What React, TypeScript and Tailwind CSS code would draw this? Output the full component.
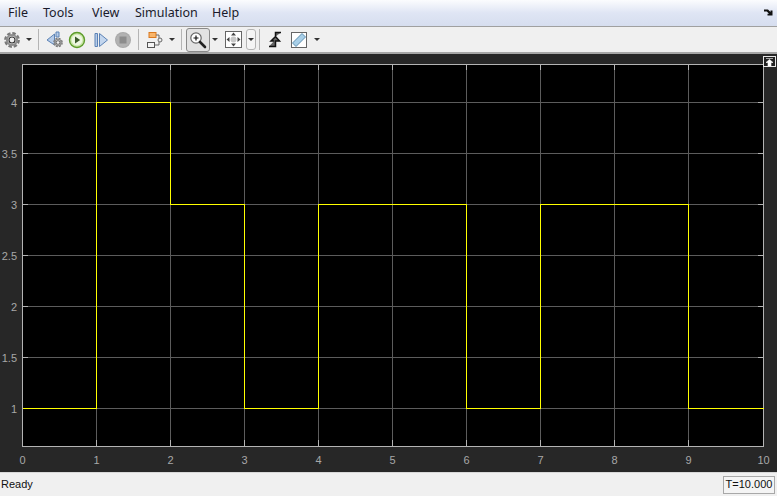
import React from "react";

const xs = Array.from({ length: 11 }, (_, i) => Math.floor(22 + i * 74.1) + 0.5);
const yTicks = [
  { l: "4", y: 102.5 },
  { l: "3.5", y: 153.5 },
  { l: "3", y: 204.5 },
  { l: "2.5", y: 255.5 },
  { l: "2", y: 306.5 },
  { l: "1.5", y: 357.5 },
  { l: "1", y: 408.5 },
];
const levels = [1, 4, 3, 1, 3, 3, 1, 3, 3, 1];
const yOf = (v: number) => 408.5 - (v - 1) * 102;

function signalPath() {
  let d = `M${xs[0]} ${yOf(levels[0])}`;
  levels.forEach((v, i) => {
    d += ` L${xs[i]} ${yOf(v)} L${xs[i + 1]} ${yOf(v)}`;
  });
  return d;
}

function Caret({ className = "" }: { className?: string }) {
  return <span className={`w-0 h-0 border-l-[3px] border-r-[3px] border-t-[3px] border-l-transparent border-r-transparent border-t-[#333] ${className}`} />;
}

function Sep({ className = "" }: { className?: string }) {
  return <span className={`w-px h-[21px] bg-[#b4b4b4] ${className}`} />;
}

function Gear({ size = 18, cx = 9, cy = 9 }: { size?: number; cx?: number; cy?: number }) {
  const s = size / 18;
  return (
    <g transform={`translate(${cx - 9 * s} ${cy - 9 * s}) scale(${s})`}>
      <circle cx="9" cy="9" r="6.6" fill="none" stroke="#7a7a7a" strokeWidth="2.6" strokeDasharray="3.4 1.8" />
      <circle cx="9" cy="9" r="5" fill="none" stroke="#8e8e8e" strokeWidth="2.2" />
      <circle cx="9" cy="9" r="3" fill="#f0f0f0" stroke="#333" strokeWidth="1.1" />
    </g>
  );
}

export default function App() {
  return (
    <div className="w-[777px] h-[496px] flex flex-col overflow-hidden bg-[#f0f0f0] font-['Noto_Sans',sans-serif]">
      <div className="h-[27px] shrink-0 flex items-center pl-2 text-[12.5px] text-[#1a1a2a] bg-gradient-to-b from-[#fbfcfe] via-[#dfe5f4] to-[#d6deef] border-b border-[#a0a0a0] relative">
        <span className="w-[35px]">File</span>
        <span className="w-[49px]">Tools</span>
        <span className="w-[43px]">View</span>
        <span className="w-[77px]">Simulation</span>
        <span>Help</span>
        <svg className="absolute right-[4px] top-[9px]" width="9" height="7" viewBox="0 0 9 7">
          <path d="M0 0.5 H4 L6.5 3 V1.5 H8.5 V6.5 H3.5 V4.8 H5 L2.8 2.5 H0 Z" fill="#111" />
        </svg>
      </div>

      <div className="h-[27px] shrink-0 flex items-center bg-[#f0f0f0] border-b-2 border-[#a6a6a6]">
        <svg className="ml-[3px]" width="18" height="18" viewBox="0 0 18 18"><Gear /></svg>
        <Caret className="ml-[5px]" />
        <Sep className="ml-[6px]" />
        <svg className="ml-[7px]" width="18" height="18" viewBox="0 0 18 18">
          <path d="M8.5 3 L1 9 L8.5 14 Z" fill="#b5cbe8" stroke="#5b82b5" strokeWidth="1" />
          <path d="M10 1 H13 V6 H10 Z" fill="#b5cbe8" stroke="#5b82b5" strokeWidth="1" />
          <Gear size={11} cx={12} cy={11.5} />
        </svg>
        <svg className="ml-[4px]" width="18" height="18" viewBox="0 0 18 18">
          <circle cx="9" cy="9" r="7.5" fill="#c9e6a6" stroke="#5d9c2a" strokeWidth="1.4" />
          <circle cx="9" cy="9" r="5.4" fill="#eef7e2" />
          <path d="M7 5.5 L12.2 9 L7 12.5 Z" fill="#3c5b2b" />
        </svg>
        <svg className="ml-[8px]" width="15" height="16" viewBox="0 0 15 16">
          <path d="M1 1.5 H3.5 V14.5 H1 Z" fill="#b5cbe8" stroke="#5b82b5" strokeWidth="1" />
          <path d="M5.5 1.5 L13.5 8 L5.5 14.5 Z" fill="#c3d6ee" stroke="#5b82b5" strokeWidth="1" />
        </svg>
        <svg className="ml-[5px]" width="18" height="18" viewBox="0 0 18 18">
          <circle cx="9" cy="9" r="8" fill="#a9a9a9" />
          <circle cx="9" cy="9" r="7" fill="#b2b2b2" />
          <rect x="5.5" y="5.5" width="7" height="7" fill="#8c8c8c" />
        </svg>
        <Sep className="ml-[6px]" />
        <svg className="ml-[7px]" width="20" height="18" viewBox="0 0 20 18">
          <rect x="3" y="1.5" width="7" height="5" fill="#f9b56a" stroke="#d9791f" />
          <rect x="1.5" y="11.5" width="7" height="5" fill="#f4f4f4" stroke="#555" />
          <path d="M10 4 H13 V7 M13 11 V14 H8.5" fill="none" stroke="#666" />
          <circle cx="14" cy="9" r="2" fill="#eee" stroke="#666" />
        </svg>
        <Caret className="ml-[3px]" />
        <Sep className="ml-[6px]" />
        <span className="ml-[4px] w-[24px] h-[24px] flex items-center justify-center rounded-[3px] border border-[#8a8a8a] bg-[#e2e2e2]">
          <svg width="18" height="18" viewBox="0 0 18 18">
            <circle cx="7" cy="7" r="5.2" fill="#fff" stroke="#666" strokeWidth="1.2" />
            <path d="M4.5 7 H9.5 M7 4.5 V9.5" stroke="#111" strokeWidth="1.2" />
            <path d="M11 11 L16 16" stroke="#222" strokeWidth="2.6" strokeLinecap="round" />
          </svg>
        </span>
        <Caret className="ml-[2px]" />
        <svg className="ml-[7px]" width="17" height="17" viewBox="0 0 17 17">
          <rect x="0.5" y="0.5" width="16" height="16" fill="#fff" stroke="#666" />
          <path d="M8.5 1.5 L11 4.5 H6 Z M8.5 15.5 L11 12.5 H6 Z M1.5 8.5 L4.5 6 V11 Z M15.5 8.5 L12.5 6 V11 Z" fill="#444" />
          <circle cx="8.5" cy="8.5" r="3" fill="#c8c8c8" />
        </svg>
        <span className="ml-[4px] w-[10px] h-[21px] flex items-center justify-center rounded-[3px] border border-[#b4b4b4] bg-[#f5f5f5]">
          <Caret />
        </span>
        <Sep className="ml-[3px]" />
        <svg className="ml-[8px]" width="14" height="17" viewBox="0 0 14 17">
          <path d="M1 15.5 H7.5 V10 H11.5 L7.5 5.5 L3 10 H6 M7.5 5.5 V1.5 H13" fill="#666" stroke="#111" strokeWidth="1.5" />
        </svg>
        <svg className="ml-[9px]" width="16" height="16" viewBox="0 0 16 16">
          <rect x="0.5" y="0.5" width="15" height="15" fill="#fff" stroke="#666" />
          <path d="M1.5 11 L11 1.5 L14.5 5 L5 14.5 Z" fill="#a8cfe8" stroke="#5c8fb0" />
        </svg>
        <Caret className="ml-[7px]" />
      </div>

      <div className="relative flex-1 min-h-0 bg-[#272727]">
        <svg className="absolute left-0 top-[-54px]" width="777" height="473" viewBox="0 0 777 473" shapeRendering="crispEdges">
          <rect x="22.5" y="64.5" width="741" height="382" fill="#000" />
          {xs.slice(1, 10).map((x) => (
            <path key={x} d={`M${x} 65 V446`} stroke="#5c5c5c" strokeWidth="1" />
          ))}
          {yTicks.map((t) => (
            <path key={t.l} d={`M23 ${t.y} H763`} stroke="#5c5c5c" strokeWidth="1" />
          ))}
          {xs.slice(1, 10).map((x) => (
            <path key={`t${x}`} d={`M${x} 440 V446 M${x} 65 V70`} stroke="#b4b4b4" strokeWidth="1" />
          ))}
          {yTicks.map((t) => (
            <path key={`t${t.l}`} d={`M23 ${t.y} H28 M758 ${t.y} H763`} stroke="#b4b4b4" strokeWidth="1" />
          ))}
          <rect x="22.5" y="64.5" width="741" height="382" fill="none" stroke="#b4b4b4" strokeWidth="1" />
          <path d={signalPath()} fill="none" stroke="#ffff00" strokeWidth="1" />
          {yTicks.map((t) => (
            <text key={`l${t.l}`} x="17" y={t.y + 4} textAnchor="end" fontSize="11" fill="#a8a8a8" fontFamily="Liberation Sans, sans-serif">{t.l}</text>
          ))}
          {xs.map((x, i) => (
            <text key={`x${i}`} x={x} y="464" textAnchor="middle" fontSize="11" fill="#a8a8a8" fontFamily="Liberation Sans, sans-serif">{i}</text>
          ))}
        </svg>
        <span className="absolute right-[1px] top-[2px] w-[13px] h-[11px] border border-[#e8e8e8] bg-[#222] flex items-center justify-center">
          <svg width="9" height="8" viewBox="0 0 9 8"><path d="M1 0.5 H8 M4.5 1.5 L8 4.5 H6 V8 H3 V4.5 H1 Z" fill="#fff" stroke="#fff" strokeWidth="0.6" /></svg>
        </span>
      </div>

      <div className="h-[24px] shrink-0 flex items-center justify-between bg-[#f0f0f0] border-t border-[#d8d8d8] text-[11px] text-[#111] font-['Liberation_Sans',sans-serif]">
        <span className="pl-[1px]">Ready</span>
        <span className="mr-[2px] w-[52px] h-[18px] flex items-center justify-center border border-[#a8a8a8] bg-[#f4f4f4] text-[11px]">T=10.000</span>
      </div>
    </div>
  );
}
